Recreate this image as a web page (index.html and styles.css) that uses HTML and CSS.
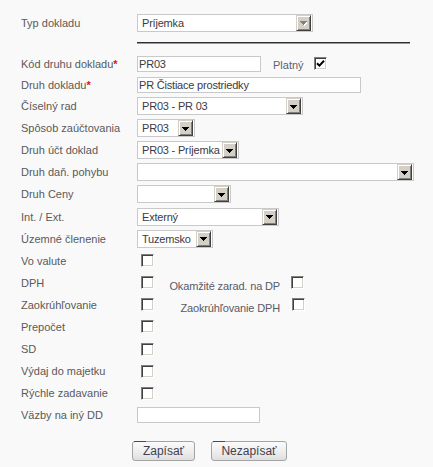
FILE: index.html
```html
<!DOCTYPE html>
<html lang="sk">
<head>
<meta charset="utf-8">
<title>Druh dokladu</title>
<link rel="stylesheet" href="styles.css">
</head>
<body>
<form class="form">
  <div class="row row-top">
    <span class="lbl">Typ dokladu</span>
    <div class="sel w176"><span class="val">Príjemka</span><span class="btn btn-dis"><svg width="7" height="5" viewBox="0 0 7 5" shape-rendering="crispEdges"><g fill="#fff"><rect x="1" y="1" width="7" height="1"/><rect x="2" y="2" width="5" height="1"/><rect x="3" y="3" width="3" height="1"/><rect x="4" y="4" width="1" height="1"/></g><g fill="#808080"><rect x="0" y="0" width="7" height="1"/><rect x="1" y="1" width="5" height="1"/><rect x="2" y="2" width="3" height="1"/><rect x="3" y="3" width="1" height="1"/></g></svg></span></div>
  </div>
  <div class="sep"></div>

  <div class="row row-in row-kod">
    <span class="lbl">Kód druhu dokladu<span class="req">*</span></span>
    <input class="inp w124" type="text" value="PR03">
    <span class="platny">Platný</span>
    <span class="cb cb-checked"><svg width="9" height="9" viewBox="0 0 9 9"><path d="M1 4.2 L3.4 6.6 L8 1.8" fill="none" stroke="#000" stroke-width="2"/></svg></span>
  </div>
  <div class="row row-in row-druh">
    <span class="lbl">Druh dokladu<span class="req">*</span></span>
    <input class="inp w224" type="text" value="PR Čistiace prostriedky">
  </div>

  <div class="row r r-first">
    <span class="lbl">Číselný rad</span>
    <div class="sel w166"><span class="val">PR03 - PR 03</span><span class="btn"><svg class="arr" width="7" height="4" viewBox="0 0 7 4" shape-rendering="crispEdges"><rect x="0" y="0" width="7" height="1"/><rect x="1" y="1" width="5" height="1"/><rect x="2" y="2" width="3" height="1"/><rect x="3" y="3" width="1" height="1"/></svg></span></div>
  </div>
  <div class="row r">
    <span class="lbl">Spôsob zaúčtovania</span>
    <div class="sel w58"><span class="val">PR03</span><span class="btn"><svg class="arr" width="7" height="4" viewBox="0 0 7 4" shape-rendering="crispEdges"><rect x="0" y="0" width="7" height="1"/><rect x="1" y="1" width="5" height="1"/><rect x="2" y="2" width="3" height="1"/><rect x="3" y="3" width="1" height="1"/></svg></span></div>
  </div>
  <div class="row r">
    <span class="lbl">Druh účt doklad</span>
    <div class="sel w102"><span class="val">PR03 - Príjemka</span><span class="btn"><svg class="arr" width="7" height="4" viewBox="0 0 7 4" shape-rendering="crispEdges"><rect x="0" y="0" width="7" height="1"/><rect x="1" y="1" width="5" height="1"/><rect x="2" y="2" width="3" height="1"/><rect x="3" y="3" width="1" height="1"/></svg></span></div>
  </div>
  <div class="row r">
    <span class="lbl">Druh daň. pohybu</span>
    <div class="sel w277"><span class="val"></span><span class="btn"><svg class="arr" width="7" height="4" viewBox="0 0 7 4" shape-rendering="crispEdges"><rect x="0" y="0" width="7" height="1"/><rect x="1" y="1" width="5" height="1"/><rect x="2" y="2" width="3" height="1"/><rect x="3" y="3" width="1" height="1"/></svg></span></div>
  </div>
  <div class="row r">
    <span class="lbl">Druh Ceny</span>
    <div class="sel w94"><span class="val"></span><span class="btn"><svg class="arr" width="7" height="4" viewBox="0 0 7 4" shape-rendering="crispEdges"><rect x="0" y="0" width="7" height="1"/><rect x="1" y="1" width="5" height="1"/><rect x="2" y="2" width="3" height="1"/><rect x="3" y="3" width="1" height="1"/></svg></span></div>
  </div>
  <div class="row r">
    <span class="lbl">Int. / Ext.</span>
    <div class="sel w142"><span class="val">Externý</span><span class="btn"><svg class="arr" width="7" height="4" viewBox="0 0 7 4" shape-rendering="crispEdges"><rect x="0" y="0" width="7" height="1"/><rect x="1" y="1" width="5" height="1"/><rect x="2" y="2" width="3" height="1"/><rect x="3" y="3" width="1" height="1"/></svg></span></div>
  </div>
  <div class="row r">
    <span class="lbl">Územné členenie</span>
    <div class="sel w76"><span class="val">Tuzemsko</span><span class="btn"><svg class="arr" width="7" height="4" viewBox="0 0 7 4" shape-rendering="crispEdges"><rect x="0" y="0" width="7" height="1"/><rect x="1" y="1" width="5" height="1"/><rect x="2" y="2" width="3" height="1"/><rect x="3" y="3" width="1" height="1"/></svg></span></div>
  </div>

  <div class="row r">
    <span class="lbl">Vo valute</span>
    <span class="cb cb-main"></span>
  </div>
  <div class="row r">
    <span class="lbl">DPH</span>
    <span class="cb cb-main"></span>
    <span class="sub">Okamžité zarad. na DP</span>
    <span class="cb cb-sub1"></span>
  </div>
  <div class="row r">
    <span class="lbl">Zaokrúhľovanie</span>
    <span class="cb cb-main"></span>
    <span class="sub">Zaokrúhľovanie DPH</span>
    <span class="cb cb-sub2"></span>
  </div>
  <div class="row r">
    <span class="lbl">Prepočet</span>
    <span class="cb cb-main"></span>
  </div>
  <div class="row r">
    <span class="lbl">SD</span>
    <span class="cb cb-main"></span>
  </div>
  <div class="row r">
    <span class="lbl">Výdaj do majetku</span>
    <span class="cb cb-main"></span>
  </div>
  <div class="row r">
    <span class="lbl">Rýchle zadavanie</span>
    <span class="cb cb-main"></span>
  </div>
  <div class="row r">
    <span class="lbl">Väzby na iný DD</span>
    <input class="inp w123" type="text" value="">
  </div>

  <div class="actions">
    <button class="button bw63" type="button">Zapísať</button>
    <button class="button bw76" type="button">Nezapísať</button>
  </div>
</form>
</body>
</html>
```

FILE: styles.css
```css
html, body {
  margin: 0;
  padding: 0;
}

body {
  background: #f9f9f9;
  font-family: "Liberation Sans", Arial, sans-serif;
  font-size: 11px;
  color: #5a5a5a;
}

.form {
  padding: 14px 0 0 21px;
}

.row {
  display: flex;
  align-items: center;
}

.lbl {
  flex: none;
  width: 116px;
  white-space: nowrap;
}

.req {
  color: #e0101a;
  font-weight: bold;
}

.row-top {
  height: 18px;
}

.sep {
  margin: 10px 0 0 116px;
  width: 273px;
  height: 0;
  border-top: 1px solid #2e2e2e;
  border-bottom: 1px solid #9a9a9a;
}

.row-in {
  height: 16px;
}

.row-kod {
  margin-top: 12px;
}

.row-druh {
  margin-top: 5px;
}

.r {
  height: 22.1px;
}

.r-first {
  margin-top: 2px;
}

/* text inputs */
.inp {
  box-sizing: border-box;
  height: 16px;
  margin: 0;
  padding: 0 1px;
  border: 1px solid #c9c9c9;
  background: #fff;
  font-family: inherit;
  font-size: 11px;
  letter-spacing: -0.2px;
  color: #3a3a44;
  outline: none;
}

.w124 { width: 124px; }
.w224 { width: 224px; }
.w123 { width: 123px; }

.platny {
  margin-left: 12px;
  width: 41px;
  color: #5f5f72;
  padding-top: 2px;
}

/* select look-alike */
.sel {
  box-sizing: border-box;
  height: 18px;
  border: 1px solid #c9c9c9;
  background: #fff;
  display: flex;
  align-items: center;
  justify-content: space-between;
  padding: 0 1px 0 4px;
  color: #3a3a44;
  letter-spacing: -0.2px;
  white-space: nowrap;
}

.w176 { width: 176px; }
.w166 { width: 166px; }
.w58 { width: 58px; }
.w102 { width: 102px; }
.w277 { width: 277px; }
.w94 { width: 94px; }
.w142 { width: 142px; }
.w76 { width: 76px; }

.btn {
  box-sizing: border-box;
  flex: none;
  width: 15px;
  height: 16px;
  background: #d4d0c8;
  border: 1px solid;
  border-color: #d4d0c8 #404040 #404040 #d4d0c8;
  box-shadow: inset 1px 1px #fff, inset -1px -1px #808080;
  display: flex;
  align-items: center;
  justify-content: center;
  padding-top: 1px;
}

.btn svg {
  display: block;
}

.arr {
  fill: #000;
}

/* checkboxes */
.cb {
  box-sizing: border-box;
  flex: none;
  width: 13px;
  height: 13px;
  background: #fff;
  border: 1px solid;
  border-color: #808080 #fff #fff #808080;
  box-shadow: inset 1px 1px #404040, inset -1px -1px #d4d0c8;
  display: flex;
  align-items: center;
  justify-content: center;
}

.cb svg {
  display: block;
}

.cb-checked {
  margin-top: -2px;
}

.cb-main {
  margin-left: 4px;
}

.sub {
  width: 126px;
  text-align: right;
  white-space: nowrap;
  padding-top: 6px;
  letter-spacing: -0.15px;
  color: #5a5a66;
}

.cb-sub1 {
  margin-left: 11px;
}

.cb-sub2 {
  margin-left: 12px;
}

/* buttons */
.actions {
  display: flex;
  gap: 16px;
  margin-top: 14.5px;
  padding-left: 111px;
}

.button {
  position: relative;
  box-sizing: border-box;
  height: 20px;
  margin: 0;
  padding: 0;
  border: 1px solid #a3a3a3;
  border-radius: 3px;
  background: linear-gradient(#fbfbfb, #ececec 60%, #dedede);
  font-family: "Liberation Sans", Arial, sans-serif;
  font-size: 12px;
  color: #3f3f50;
}

.button::before {
  content: "";
  position: absolute;
  top: -1px;
  left: 1px;
  width: 12px;
  height: 1px;
  background: #4a4a4a;
}

.bw63 { width: 63px; }
.bw76 { width: 76px; }
```
